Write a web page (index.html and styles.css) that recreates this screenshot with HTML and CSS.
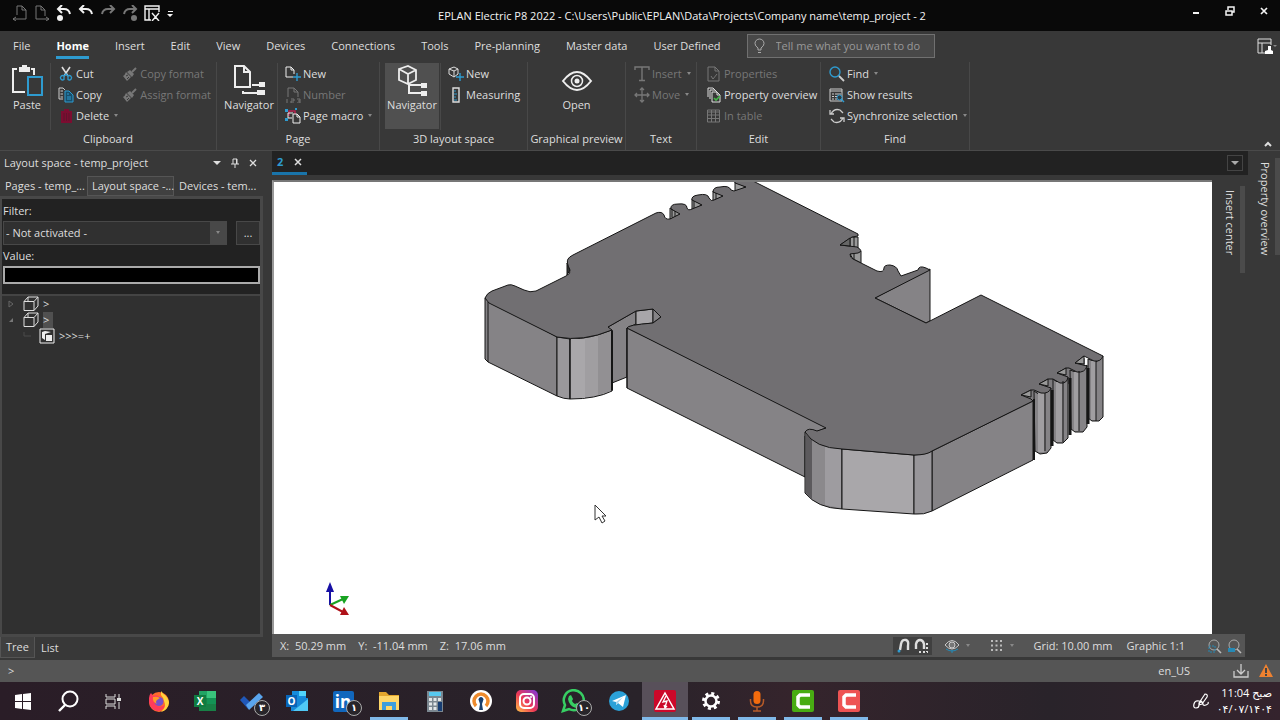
FILE: index.html
```html
<!DOCTYPE html>
<html lang="en">
<head>
<meta charset="utf-8">
<title>EPLAN Electric P8 2022</title>
<link rel="stylesheet" href="styles.css">
</head>
<body>
<svg class="defs" aria-hidden="true">
  <symbol id="cube" viewBox="0 0 16 16"><path d="M1 5.500h10v9H1zM1 5.500l4-4.500h10l-4 4.500M15 1v9l-4 4.500M5 1v4" fill="none" stroke="currentColor"/></symbol>
  <symbol id="brush" viewBox="0 0 16 16"><path d="M14 2l-4 4" stroke="currentColor" stroke-width="2"/><path d="M8 4l4 4-2 3-5-5zM4 6l5 5-4 4-4-5q2-1 3-4z" fill="currentColor"/><path d="M4 10l2-1M5 13l2-2" stroke="#383838"/></symbol>
</svg>

<header class="titlebar">
  <div class="quick">
    <button aria-label="Previous page"><svg class="dim" viewBox="0 0 16 16"><path d="M5 10V1h5l4 4v9H6M10 1v4h4M6 14H1m3-2l-3 2 3 2" fill="none" stroke="currentColor"/></svg></button>
    <button aria-label="Next page"><svg class="dim" viewBox="0 0 16 16"><path d="M9 14H2V1h5l4 4v6M7 1v4h4M9 14h6m-3-2l3 2-3 2" fill="none" stroke="currentColor"/></svg></button>
    <button aria-label="Undo list"><svg viewBox="0 0 16 16"><path d="M3 4h5q5 0 6 5M6 0L2 4l4 4" fill="none" stroke="currentColor" stroke-width="2"/><circle cx="4" cy="13" r="3" fill="currentColor"/></svg></button>
    <button aria-label="Undo"><svg viewBox="0 0 16 16"><path d="M3 4h5q5 0 6 5M6 0L2 4l4 4" fill="none" stroke="currentColor" stroke-width="2"/></svg></button>
    <button aria-label="Redo"><svg class="dim" viewBox="0 0 16 16"><path d="M13 4H8Q3 4 2 9M10 0l4 4-4 4" fill="none" stroke="currentColor" stroke-width="2"/></svg></button>
    <button aria-label="Redo list"><svg class="dim" viewBox="0 0 16 16"><path d="M13 4H8Q3 4 2 9M10 0l4 4-4 4" fill="none" stroke="currentColor" stroke-width="2"/><circle cx="12" cy="13" r="3" fill="currentColor"/></svg></button>
    <button aria-label="Close workspace"><svg viewBox="0 0 16 16"><path d="M7 15H1V1h14v6M1 4h14M5 4v11M8 8l7 8M15 8l-7 8" fill="none" stroke="currentColor" stroke-width="1.400"/></svg></button>
    <button class="narrow" aria-label="Customize"><svg viewBox="0 0 8 16"><path d="M2 6h5v1H2zM1 9h6l-3 3z" fill="currentColor"/></svg></button>
  </div>
  <div class="title">EPLAN Electric P8 2022 - C:\Users\Public\EPLAN\Data\Projects\Company name\temp_project - 2</div>
  <div class="wincontrols">
    <button aria-label="Minimize"><svg viewBox="0 0 12 12"><path d="M3 8h6" stroke="currentColor" stroke-width="2"/></svg></button>
    <button aria-label="Restore"><svg viewBox="0 0 12 12"><path d="M2 6h6v4H2zM4 5V2h6v5H8" fill="none" stroke="currentColor" stroke-width="1.500"/></svg></button>
    <button aria-label="Close"><svg viewBox="0 0 12 12"><path d="M3 3l6 6M9 3L3 9" stroke="currentColor" stroke-width="1.700"/></svg></button>
  </div>
</header>

<section class="ribbon">
  <nav class="tabs">
    <button>File</button><button class="active">Home</button><button>Insert</button><button>Edit</button><button>View</button><button>Devices</button><button>Connections</button><button>Tools</button><button>Pre-planning</button><button>Master data</button><button>User Defined</button>
    <div class="tell">
      <svg viewBox="0 0 16 16"><path d="M6 12v-2q-3-2-3-4.500a4.500 4.500 0 0 1 9 0Q12 8 9 10v2zM6 14.500h3" fill="none" stroke="currentColor"/></svg>
      <input type="text" placeholder="Tell me what you want to do" aria-label="Tell me what you want to do">
    </div>
    <button class="workspace" aria-label="Workspace"><svg viewBox="0 0 20 16"><path d="M9 15H1V1h13v6M1 5h13M5 5v10" fill="none" stroke="currentColor"/><path d="M8 16v-3l3-1V8h3v4l2 1v3z" fill="#fff"/><path d="M16 7h4l-2 2z" fill="#888"/></svg></button>
  </nav>

  <div class="groups">
    <section class="group g-clip">
      <div class="tools">
        <button class="big"><svg viewBox="0 0 32 32"><path d="M6 4H2v23h12M20 4h3v6" fill="none" stroke="#eee" stroke-width="2"/><path d="M8 2h3V0h5v2h3v5H8z" fill="#eee"/><path d="M17 12h14v18H17z" fill="none" stroke="#2e9bd0" stroke-width="2"/></svg><span>Paste</span></button>
        <div class="col">
          <button class="small"><svg viewBox="0 0 16 16"><path d="M4 1l6 9M12 1L6 10" stroke="#ddd" stroke-width="1.600"/><path d="M6 10a2.200 2.200 0 1 0 0 3.500zM10 10a2.200 2.200 0 1 1 0 3.500zM6 10l2-2 2 2" fill="none" stroke="#2e9bd0" stroke-width="1.300"/></svg><span>Cut</span></button>
          <button class="small"><svg viewBox="0 0 16 16"><path d="M5 12H1V1h4l2 2M2.500 4H5m-2.500 3H5m-2.500 3H5" fill="none" stroke="#ccc"/><path d="M7 4h4l4 4v7H7z" fill="#184f6b" stroke="#2e9bd0"/><path d="M9 7h2m-2 3h4m-4 2h4" stroke="#2e9bd0"/></svg><span>Copy</span></button>
          <button class="small"><svg viewBox="0 0 16 16"><path d="M3 3h3V1h5v2h3v12H3z" fill="#7c0d31"/><path d="M6 5v8m2.500-8v8m2.500-8v8" stroke="#5f142c"/></svg><span>Delete</span><i class="caret"></i></button>
        </div>
        <div class="col plain">
          <button class="small off"><svg><use href="#brush"/></svg><span>Copy format</span></button>
          <button class="small off"><svg><use href="#brush"/></svg><span>Assign format</span></button>
        </div>
      </div>
      <h2>Clipboard</h2>
    </section>

    <section class="group g-page">
      <div class="tools">
        <button class="big"><svg viewBox="0 0 32 32"><path d="M2 1h9l6 6v15H2zM11 1v6h6" fill="none" stroke="#eee" stroke-width="2"/><path d="M19 20h8M10 26v2h15" stroke="#eee" stroke-width="2" fill="none"/><path d="M26 17h6v5h-6zM24 25h8v5h-8z" fill="#eee"/></svg><span>Navigator</span></button>
        <div class="col">
          <button class="small"><svg viewBox="0 0 16 16"><path d="M8 11H1V1h5l3 3v4M6 1v3h3" fill="none" stroke="#eee"/><path d="M12 7v8M8 11h8" stroke="#2e9bd0" stroke-width="1.400"/></svg><span>New</span></button>
          <button class="small off"><svg viewBox="0 0 16 16"><path d="M3 10V1h6l4 4v5M9 1v4h4" fill="none" stroke="currentColor"/><path d="M2 12v4M6 12h3v2H6v2h3M12 12h3v4h-3M13 14h2" fill="none" stroke="currentColor"/></svg><span>Number</span></button>
          <button class="small"><svg viewBox="0 0 16 16"><path d="M0 1h3v3H0zM10 0h2v2h-2zM0 10h3v3H0z" fill="#2e9bd0"/><path d="M4 8V3h6v3" fill="none" stroke="#b3214e" stroke-width="1.500"/><path d="M3 5v5h4M3 5h5M8 6h4l3 3v6H8zM12 6v3h3" fill="none" stroke="#eee"/></svg><span>Page macro</span><i class="caret"></i></button>
        </div>
      </div>
      <h2>Page</h2>
    </section>

    <section class="group g-3d">
      <div class="tools">
        <button class="big pressed"><svg viewBox="0 0 32 32"><path d="M3 4l9-3 8 4v10l-8 4-9-4zM3 4l9 5 8-4M12 9v10" fill="none" stroke="#eee" stroke-width="1.800"/><path d="M26 20H13v8h12" stroke="#eee" stroke-width="2" fill="none"/><path d="M25 18h6v5h-6zM25 26h6v5h-6z" fill="#eee"/></svg><span>Navigator</span></button>
        <div class="col">
          <button class="small"><svg viewBox="0 0 16 16"><path d="M1 3l5-2 4 2v5l-4 3-5-3zM1 3l5 2 4-2M6 5v6" fill="none" stroke="#ddd"/><path d="M12 7v8M8 11h8" stroke="#2e9bd0" stroke-width="1.400"/></svg><span>New</span></button>
          <button class="small"><svg viewBox="0 0 16 16"><path d="M5 1h6v14H5z" fill="none" stroke="#ddd" stroke-width="1.400"/><path d="M6 4h2M6 7h3M6 10h2M6 13h3" stroke="#2e9bd0"/></svg><span>Measuring</span></button>
        </div>
      </div>
      <h2>3D layout space</h2>
    </section>

    <section class="group g-preview">
      <div class="tools center">
        <button class="big"><svg viewBox="0 0 32 32"><path d="M2 16Q16-2 30 16Q16 34 2 16z" fill="none" stroke="#eee" stroke-width="2"/><circle cx="16" cy="16" r="5.500" fill="none" stroke="#eee" stroke-width="1.500"/><circle cx="16" cy="16" r="2.500" fill="#eee"/></svg><span>Open</span></button>
      </div>
      <h2>Graphical preview</h2>
    </section>

    <section class="group g-text">
      <div class="tools">
        <div class="col plain">
          <button class="small off"><svg viewBox="0 0 16 16"><path d="M1 4V1h14v3M8 1v13M5 14.500h6" fill="none" stroke="currentColor" stroke-width="1.400"/></svg><span>Insert</span><i class="caret"></i></button>
          <button class="small off"><svg viewBox="0 0 16 16"><path d="M8 1v14M1 8h14M6 3l2-2 2 2M6 13l2 2 2-2M3 6L1 8l2 2M13 6l2 2-2 2" fill="none" stroke="currentColor" stroke-width="1.300"/></svg><span>Move</span><i class="caret"></i></button>
        </div>
      </div>
      <h2>Text</h2>
    </section>

    <section class="group g-edit">
      <div class="tools">
        <div class="col plain">
          <button class="small off"><svg viewBox="0 0 16 16"><path d="M2 1h7l4 4v10H2zM9 1v4h4M5 10l2 3 4-5" fill="none" stroke="currentColor"/></svg><span>Properties</span></button>
          <button class="small"><svg viewBox="0 0 16 16"><path d="M2 10V1h5l2 2M4 12V3h5l2 2M6 5h5l3 3v7H6zM11 5v3h3" fill="none" stroke="#ddd"/><path d="M8 11l2 2 4-4" fill="none" stroke="#45b649" stroke-width="1.600"/></svg><span>Property overview</span></button>
          <button class="small off"><svg viewBox="0 0 16 16"><path d="M1.500 2h12v12h-12zM1.500 4h12M1.500 7h12M1.500 10.500h12M5.500 2v12M9.500 2v12" fill="none" stroke="currentColor"/></svg><span>In table</span></button>
        </div>
      </div>
      <h2>Edit</h2>
    </section>

    <section class="group g-find">
      <div class="tools">
        <div class="col plain">
          <button class="small"><svg viewBox="0 0 16 16"><circle cx="6" cy="6" r="5" fill="none" stroke="#2e9bd0" stroke-width="1.400"/><path d="M10 10l5 5" stroke="#ccc" stroke-width="1.800"/></svg><span>Find</span><i class="caret"></i></button>
          <button class="small"><svg viewBox="0 0 16 16"><path d="M1 2h12v12H1zM1 4h12M3 7h2m1 0h6M3 9.500h2m1 0h4M3 12h2m1 0h2" fill="none" stroke="#ccc"/><circle cx="10.500" cy="10.500" r="2.500" fill="#2b3a42" stroke="#2e9bd0"/><path d="M12 12l3 3" stroke="#2e9bd0" stroke-width="1.500"/></svg><span>Show results</span></button>
          <button class="small"><svg viewBox="0 0 16 16"><path d="M2 6q3-6 9-4l3 3M1 2v4h4M14 10q-3 6-9 4l-3-3M15 14v-4h-4" fill="none" stroke="#ccc" stroke-width="1.300"/></svg><span>Synchronize selection</span><i class="caret"></i></button>
        </div>
      </div>
      <h2>Find</h2>
    </section>
    <button class="collapse" aria-label="Collapse ribbon"><svg viewBox="0 0 10 10"><path d="M2 7l3-3 3 3" fill="none" stroke="currentColor" stroke-width="2"/></svg></button>
  </div>
</section>

<main class="work">
  <aside class="panel">
    <div class="panelhead">
      <h1>Layout space - temp_project</h1>
      <button aria-label="Menu"><svg viewBox="0 0 10 10"><path d="M1 3h8L5 7z" fill="currentColor"/></svg></button>
      <button aria-label="Pin"><svg viewBox="0 0 10 10"><path d="M3 1h4v5M3 1v5M1 6h8M5 6v4M6.500 1v5" fill="none" stroke="currentColor"/></svg></button>
      <button aria-label="Close"><svg viewBox="0 0 10 10"><path d="M2 2l6 6M8 2L2 8" stroke="currentColor" stroke-width="1.300"/></svg></button>
    </div>
    <div class="paneltabs"><button>Pages - temp_...</button><button class="active">Layout space -...</button><button>Devices - tem...</button></div>
    <div class="panelbody">
      <form class="filter">
        <label for="filter">Filter:</label>
        <div class="filterrow">
          <div class="combo"><select id="filter"><option>- Not activated -</option></select><i class="caret"></i></div>
          <button type="button">...</button>
        </div>
        <label for="value">Value:</label>
        <input id="value" type="text">
      </form>
      <ul class="tree">
        <li><svg class="twist" viewBox="0 0 8 8"><path d="M2 1l4 3-4 3z" fill="none" stroke="#666"/></svg><svg><use href="#cube"/></svg><span>&gt;</span></li>
        <li><svg class="twist" viewBox="0 0 8 8"><path d="M6 2v4H2z" fill="#777"/></svg><svg><use href="#cube"/></svg><span class="sel">&gt;</span></li>
        <li class="child"><svg class="twist" viewBox="0 0 8 8"><path d="M1 0v4h7" fill="none" stroke="#4a4a4a"/></svg><svg viewBox="0 0 16 16"><path d="M1 1h14v14H1z" fill="none" stroke="#eee"/><path d="M3 4l3-1 6 1-6 2v6l-3-2zM7 7h6v6H7z" fill="#eee"/></svg><span>&gt;&gt;&gt;=+</span></li>
      </ul>
    </div>
    <div class="paneltabs bottom"><button class="active">Tree</button><button>List</button></div>
  </aside>

  <section class="doc">
    <div class="doctabs">
      <div class="doctab"><a href="#view">2</a><button aria-label="Close tab"><svg viewBox="0 0 10 10"><path d="M2 2l6 6M8 2L2 8" stroke="currentColor" stroke-width="1.500"/></svg></button></div>
      <button class="doclist" aria-label="Open documents"><svg viewBox="0 0 10 10"><path d="M1 3h8L5 7z" fill="currentColor"/></svg></button>
    </div>
    <div class="viewrow">
      <div class="canvas" id="view">
        <svg viewBox="274 182 938 452" preserveAspectRatio="xMidYMid slice" role="img" aria-label="3D terminal housing">
          <g stroke="#151515" stroke-linejoin="round">
            <path d="M1022 395L1031 390L1040 384L1048 379L1058 373L1066 368L1076 363L1085 358V375L1034 403Z" fill="#7d7b7e" stroke="none"/>
            <g fill="#858386">
              <path d="M485 298V359L488 362L557 396V337Z"/><path d="M488 302V362"/>
              <path d="M608 327L636 311V324L627 328V377L612 383Z"/>
              <path d="M627 328L822 423L826 428L805 436V477L627 388Z"/>
              <path d="M932 451L1033 401V460L932 511Z"/>
              <path d="M875 298L930 269V321L926 323Z"/>
              <path d="M1034 391L1040 395L1051 388V448L1047 453L1040 454L1035 451Z"/>
              <path d="M1053 379L1060 384L1068 377V438L1063 443L1057 443L1053 440Z"/>
              <path d="M1070 370L1078 373L1087 365V427L1083 432L1075 432L1071 429Z"/>
              <path d="M1088 359L1096 362L1103 356V417L1099 421L1092 421L1088 418Z"/>
            </g>
            <path d="M1038 393h6v59h-6zM1056 382h6v60h-6zM1074 372h5v59h-5zM1091 361h5v59h-5z" fill="#a09ea1" stroke="none"/>
            <path d="M557 337V396Q564 399 570 399V339Z" fill="#9a989b"/>
            <path d="M570 339V399Q596 399 612 391V330Q590 339 570 339Z" fill="#a09ea1"/>
            <path d="M571 339h14v59h-14z" fill="#a9a7aa" stroke="none"/><path d="M598 336l13-5v60l-13 4z" fill="#929093" stroke="none"/><path d="M570 339V399M612 330V391" fill="none"/>
            <path d="M805 432V493Q817 508 842 509V449Q819 448 805 432Z" fill="#8b898c"/>
            <path d="M806 434l6 6v60l-6-7z" fill="#5c5a5d" stroke="none"/><path d="M825 446l16 3v59l-16-3z" fill="#9e9ca0" stroke="none"/>
            <path d="M842 449L914 455V514L842 509Z" fill="#a9a7aa"/>
            <path d="M914 455Q927 454 932 451V511Q924 515 914 514Z" fill="#98969a"/>
            <path d="M636 311L653 309V323L636 325Z" fill="#a8a6a9"/><path d="M653 309L661 317L653 323Z"  fill="#858386"/>
            <path d="M567 263V275L570 270Z" fill="#333"/>
            <g fill="#999"><path d="M670 208V219L681 214ZM692 199V210L702 205ZM713 191V201L724 196ZM735 182V192L746 187ZM850 237H858V249L850 247ZM850 254L861 251V263L853 259Z"/></g>
            <path fill="#716f72" d="M485 298Q487 293 492 291L508 285Q511 284 515 286L524 290Q530 293 536 291L566 276Q571 274 570 270Q566 262 568 259Q569 257 573 255L656 213Q662 211 664 215Q665 220 670 219L680 214L671 209Q670 204 678 204Q687 203 687 208Q688 211 692 209L702 205L692 200Q691 196 698 195Q708 193 709 198Q711 202 714 200L723 196L713 192Q713 187 720 187Q729 185 731 190Q734 192 737 190L746 187L735 183V181H753L858 234V236L852 237L840 245L857 247Q864 251 858 253L850 254Q850 258 853 259L877 271Q884 273 884 268Q884 265 890 265Q897 266 898 271L901 276L918 270Q919 265 926 268L930 270L875 298L926 323L981 295L1103 356Q1101 362 1094 361L1088 358L1084 356L1075 363L1087 366Q1085 373 1077 372L1069 368L1066 368L1057 373L1068 377Q1067 384 1060 383L1053 379L1048 379L1039 384L1051 388Q1049 394 1041 393L1034 390L1031 390L1021 395L1031 399L1033 401L932 451Q927 455 914 455L842 449Q815 448 805 432Q808 427 817 431L826 428L627 328Q627 325 653 323L661 317L653 309L636 311L608 327L612 330Q583 342 557 337L489 303Z"/>
            <path d="M1075 363L1084 356V364ZM1057 373L1066 368V375ZM1039 384L1048 379V386ZM1021 395L1031 390V397Z" fill="#999"/>
            <path d="M840 245L850 238V246ZM672 209V217M675 211V216M694 201V208M716 193V199M854 237V247M854 254V259" fill="#666"/>
            <path d="M627 328V388M1045 393V451M1063 381V442M1079 371V431M1096 361V421" fill="none"/>
            <path d="M1034 399V460M612 331V390" stroke-width="2" fill="none"/>
            <path d="M1052 390V446M1070 378V435M1088 368V424" stroke-width="3" fill="none"/>
          </g>
          <path d="M330 605V588" stroke="#1710a5" stroke-width="2"/><path d="M326 592L330 582L334 592Z" fill="#1710a5"/>
          <path d="M330 605L343 599" stroke="#18a322" stroke-width="2"/><path d="M340 596L349 596L344 604Z" fill="#18a322"/>
          <path d="M330 605L343 612" stroke="#ae1018" stroke-width="2"/><path d="M344 607L349 615L340 615Z" fill="#ae1018"/>
          <path d="M595 505V520L599 517L602 523L605 521L602 516H606Z" fill="#fff" stroke="#333"/>
        </svg>
      </div>
      <div class="rail inner"><button>Insert center</button></div>
    </div>
    <div class="status">
      <span>X:&nbsp; 50.29 mm</span><span>Y:&nbsp; -11.04 mm</span><span>Z:&nbsp; 17.06 mm</span>
      <div class="snaps">
        <button aria-label="Object snap"><svg viewBox="0 0 16 16"><path d="M5 12L6 6q1-5 5-4 3 1 2 6v4" fill="none" stroke="#ddd" stroke-width="2.400"/><circle cx="4" cy="13" r="1.500" fill="#2e9bd0"/></svg></button>
        <button aria-label="Grid snap"><svg viewBox="0 0 16 16"><path d="M2 11V6q1-4 4-4t4 4v5" fill="none" stroke="#ddd" stroke-width="2.400"/><path d="M13 5v9M5 14h9" stroke="#ddd" stroke-width="2" stroke-dasharray="2 2"/></svg></button>
      </div>
      <button class="drop" aria-label="View"><svg viewBox="0 0 16 16"><path d="M1 7q7-9 14 0-7 8-14 0z" fill="none" stroke="#ccc"/><circle cx="8" cy="7" r="3" fill="#777" stroke="#ccc"/><path d="M2 11q6 4 12 0M8 12v3" fill="none" stroke="#2589b5"/></svg><i class="caret"></i></button>
      <button class="drop" aria-label="Grid"><svg viewBox="0 0 16 16"><path d="M3 3h11M3 7.500h11M3 12h11" stroke="#bbb" stroke-width="2" stroke-dasharray="2 2.500"/></svg><i class="caret"></i></button>
      <span>Grid: 10.00 mm</span><span class="scale">Graphic 1:1</span>
      <button aria-label="Zoom window"><svg viewBox="0 0 16 16"><circle cx="8" cy="7" r="5" fill="none" stroke="#aaa"/><path d="M11 11l4 4" stroke="#bbb" stroke-width="1.600"/><path d="M3 8h6v6H3z" fill="none" stroke="#2589b5" stroke-dasharray="2 1"/></svg></button>
      <button aria-label="Zoom entire page"><svg viewBox="0 0 16 16"><circle cx="8" cy="7" r="5" fill="none" stroke="#aaa"/><path d="M11 11l4 4" stroke="#bbb" stroke-width="1.600"/><path d="M2 10h7v4H2z" fill="#2589b5"/></svg></button>
    </div>
  </section>
  <div class="rail outer"><button>Property overview</button></div>
</main>

<div class="command">
  <span>&gt;</span><span class="lang">en_US</span>
  <svg viewBox="0 0 16 16"><path d="M1 8v6h14V8M8 1v10M4 7l4 4 4-4" fill="none" stroke="#ccc" stroke-width="1.300"/></svg>
  <svg viewBox="0 0 16 16"><path d="M8 1l7 13H1z" fill="#ee8130"/><path d="M8 5v5M8 11v2" stroke="#444" stroke-width="2"/></svg>
</div>

<footer class="taskbar">
  <div class="sys">
    <button aria-label="Start"><svg viewBox="0 0 24 24"><path d="M4 6l7-1v7H4zM12 5l8-1v8h-8zM4 13h7v7l-7-1zM12 13h8v8l-8-1z" fill="#fff"/></svg></button>
    <button aria-label="Search"><svg viewBox="0 0 24 24"><circle cx="14" cy="10" r="7.500" fill="none" stroke="#fff" stroke-width="2"/><path d="M9 16l-6 6" stroke="#fff" stroke-width="2.400"/></svg></button>
    <button aria-label="Task view"><svg viewBox="0 0 24 24"><path d="M5 5v3h9V5M5 20v-3h9v3M5 10h9v5H5zM18 5v4M18 13v7" fill="none" stroke="#ddd"/><path d="M16 9h4v3h-4z" fill="#ddd"/></svg></button>
  </div>
  <div class="apps">
    <button aria-label="Firefox"><svg viewBox="0 0 24 24"><circle cx="12" cy="13" r="10" fill="#ff6a2b"/><path d="M14 2q2 3 4 4 4 4 4 8-1 7-8 9 6-5 3-11-1-4-3-6z" fill="#ffd33c"/><path d="M2 9q0-3 2-5l2 3q5-2 7 2-6 0-5 5 3 6 10 2-2 6-8 6Q3 20 2 13z" fill="#ff3c5a"/><circle cx="12" cy="12.500" r="4.500" fill="#7751c9"/><path d="M6 8q4-1 7 1l-3 2q-2 2 0 4-5-2-4-7z" fill="#ff9a26"/></svg></button>
    <button aria-label="Excel"><svg viewBox="0 0 24 24"><path d="M6 2h17v20H6z" fill="#188046"/><path d="M14 2h9v7h-9z" fill="#39c47c"/><path d="M6 2h8v7H6z" fill="#21a464"/><path d="M14 9h9v6h-9z" fill="#149355"/><path d="M1 6h12v12H1z" fill="#107c41"/><text x="7" y="16" class="logo">X</text></svg></button>
    <button aria-label="To Do"><svg viewBox="0 0 24 24"><path d="M1 11l4-4 8 8-4 5z" fill="#2058b9"/><path d="M7 16L20 4l4 4L10 21z" fill="#5aa5ee"/></svg><b class="badge">۳</b></button>
    <button aria-label="Outlook"><svg viewBox="0 0 24 24"><path d="M7 2h14v9H7z" fill="#168bdc"/><path d="M14 2h7v5h-7z" fill="#50d4fb"/><path d="M6 9h17v13H6z" fill="#1689d7"/><path d="M23 10L8 22h15z" fill="#50c9f5"/><path d="M1 6h11v12H1z" fill="#0865b8"/><text x="6.500" y="16" class="logo">O</text></svg></button>
    <button aria-label="LinkedIn"><svg viewBox="0 0 24 24"><rect x="2" y="2" width="21" height="21" rx="2" fill="#1167bd"/><text x="12" y="19" class="logo big-logo">in</text></svg><b class="badge">۱</b></button>
    <button class="open" aria-label="File Explorer"><svg viewBox="0 0 24 24"><path d="M2 3h7l3 3h10v3H2z" fill="#e4a72d"/><path d="M2 7h20v14H2z" fill="#ffd768"/><path d="M5 13h14v8h-4v-4H9v4H5z" fill="#3d9edc"/></svg></button>
    <button aria-label="Calculator"><svg viewBox="0 0 24 24"><path d="M4 2h16v21H4z" fill="#7b8790"/><path d="M6 3h12v4H6z" fill="#57c8ef"/><path d="M6 9h3v3H6zM10.500 9h3v3h-3zM15 9h3v3h-3zM6 13.500h3v3H6zM10.500 13.500h3v3h-3zM6 18h3v3H6zM10.500 18h3v3h-3z" fill="#e2e6e8"/><path d="M15 13h4v9h-4z" fill="#173d72"/></svg></button>
    <button aria-label="OpenVPN"><svg viewBox="0 0 24 24"><circle cx="12" cy="12" r="11" fill="#fff"/><path d="M7 17a7 7 0 1 1 10 0" fill="none" stroke="#ee8b2d" stroke-width="3.500"/><path d="M10 12a2.500 2.500 0 1 1 4 0l-1 3 1 6h-4l1-6z" fill="#173e6d"/></svg></button>
    <button aria-label="Instagram"><svg viewBox="0 0 24 24"><defs><linearGradient id="ig" x1="0" y1="1" x2="1" y2="0"><stop offset="0" stop-color="#ffc647"/><stop offset=".45" stop-color="#ed3755"/><stop offset="1" stop-color="#7c37df"/></linearGradient></defs><rect x="1" y="1" width="22" height="22" rx="5" fill="url(#ig)"/><rect x="5" y="5" width="14" height="14" rx="4" fill="none" stroke="#fff" stroke-width="2"/><circle cx="12" cy="12" r="3.500" fill="none" stroke="#fff" stroke-width="2"/><circle cx="16" cy="8" r="1" fill="#fff"/></svg></button>
    <button aria-label="WhatsApp"><svg viewBox="0 0 24 24"><path d="M2 22l2-6a10 10 0 1 1 4 4z" fill="none" stroke="#37ce63" stroke-width="2.500"/><path d="M8 7l2-1 2 4-1 2q1 2 3 3l2-1 3 2q-1 3-4 3Q8 17 7 10z" fill="#37ce63"/></svg><b class="badge">۱۰</b></button>
    <button aria-label="Telegram"><svg viewBox="0 0 24 24"><circle cx="12" cy="12" r="10" fill="#2ba1d8"/><path d="M5 12l14-6-3 12-5-4-2 2v-3z" fill="#fff"/><path d="M9 13l7-5-5 6-2 2z" fill="#a9d6ec"/></svg></button>
    <button class="open current" aria-label="EPLAN"><svg viewBox="0 0 24 24"><rect x="1" y="1" width="22" height="22" rx="2" fill="#cc0829"/><path d="M12 4l9 16H3z" fill="none" stroke="#fff" stroke-width="1.500"/><path d="M13 7l-3 6 4-1-2 6m-1-2l1 3 2-2" fill="none" stroke="#fff" stroke-width="1.300"/></svg></button>
    <button class="open" aria-label="Settings"><svg viewBox="0 0 24 24"><circle cx="12" cy="12" r="7.500" fill="none" stroke="#fff" stroke-width="3" stroke-dasharray="3 2.890"/><circle cx="12" cy="12" r="5.500" fill="none" stroke="#fff" stroke-width="2.500"/></svg></button>
    <button class="open" aria-label="Recorder"><svg viewBox="0 0 24 24"><rect x="8.500" y="2" width="7" height="13" rx="3.500" fill="#f36b0d"/><path d="M5.500 10v2q0 6 6.500 6t6.500-6v-2M12 18v4M8 22h8" fill="none" stroke="#b85b28" stroke-width="1.500"/></svg></button>
    <button class="open" aria-label="Camtasia"><svg viewBox="0 0 24 24"><rect x="1" y="1" width="22" height="22" rx="2" fill="#48ac12"/><path d="M19 6H9L7 8v8l2 2h10" fill="none" stroke="#fff" stroke-width="3.500"/></svg></button>
    <button class="open" aria-label="Camtasia Recorder"><svg viewBox="0 0 24 24"><rect x="1" y="1" width="22" height="22" rx="2" fill="#ee5353"/><path d="M19 6H9L7 8v8l2 2h10" fill="none" stroke="#fff" stroke-width="3.500"/></svg></button>
  </div>
  <svg class="pen" viewBox="0 0 16 16"><path d="M9 9q-3 0-3 3t-3 3-2-4 5-3 4 3 3 1 2-3M6 10l6-9q3 0 2 3l-5 7-3 1zM8 8l2 2" fill="none" stroke="#fff" stroke-width="1.200"/></svg>
  <div class="clock"><span dir="rtl">صبح 11:04</span><span>۰۴/۰۷/۱۴۰۴</span></div>
</footer>
</body>
</html>
```

FILE: styles.css
```css
* { box-sizing: border-box; }
body {
  margin: 0;
  height: 100vh;
  display: flex;
  flex-direction: column;
  overflow: hidden;
  background: #383838;
  color: #dedede;
  font: 11px/16px "Open Sans", "Noto Sans", "DejaVu Sans", sans-serif;
}
button, input, select { font: inherit; color: inherit; }
button { background: none; border: 0; padding: 0; white-space: nowrap; }
h1, h2 { margin: 0; font-size: 11px; font-weight: 400; }
svg { width: 16px; height: 16px; display: block; flex: none; }
.defs { display: none; }
.dim { color: #777; }
.caret {
  border: 2px solid transparent;
  border-top: 3px solid #888;
  border-bottom: 0;
  margin-left: 3px;
}

.titlebar {
  flex: none;
  height: 31px;
  display: flex;
  justify-content: space-between;
  background: #090909;
  color: #f3f3f3;
}
.quick { display: flex; align-items: center; gap: 6px; padding: 0 0 5px 12px; }
.title { line-height: 32px; white-space: nowrap; }
.wincontrols { display: flex; align-items: start; padding: 5px 10px 0 0; gap: 22px; }
.wincontrols svg { width: 12px; height: 12px; }
.narrow svg { width: 8px; }

.ribbon { flex: none; border-bottom: 1px solid #4a4a4a; }
.tabs { height: 30px; display: flex; align-items: center; gap: 26px; padding-left: 13px; }
.tabs > button { height: 26px; padding-top: 2px; border-bottom: 3px solid transparent; }
.tabs > .active { border-color: #2e9bd0; font-weight: 700; color: #fff; }
.tell {
  display: flex;
  align-items: center;
  gap: 8px;
  width: 188px;
  height: 24px;
  padding: 0 4px;
  border: 1px solid #707070;
  background: #484848;
  color: #aaa;
}
.tell input { flex: 1; min-width: 0; padding: 0; border: 0; background: none; }
.tell input::placeholder { color: #999; opacity: 1; }
.tabs > .workspace { margin-left: auto; height: 16px; border: 0; padding: 0 3px 0 0; }
.workspace svg { width: 20px; }

.groups { display: flex; height: 89px; padding-top: 1px; }
.group { display: flex; flex-direction: column; flex: none; border-right: 1px solid #484848; }
.g-clip { width: 217px; }
.g-page { width: 163px; }
.g-3d { width: 148px; }
.g-preview { width: 98px; }
.g-text { width: 71px; }
.g-edit { width: 124px; }
.g-find { width: 149px; }
.group h2 { text-align: center; white-space: nowrap; line-height: 18px; }
.tools { display: flex; height: 68px; padding: 1px 0 0 5px; }
.center { justify-content: center; padding-left: 0; }
.big { flex: none; width: 54px; height: 66px; display: flex; flex-direction: column; align-items: center; padding-top: 2px; }
.g-clip .big { width: 44px; }
.big svg { width: 32px; height: 32px; }
.pressed { background: #505050; }
.col { display: flex; flex-direction: column; padding-left: 7px; margin-left: 1px; border-left: 1px solid #484848; }
.plain { border: 0; margin: 0; padding-left: 4px; }
.g-text .plain, .g-find .plain { padding-left: 3px; }
.small { display: flex; align-items: center; gap: 2px; height: 21px; }
.off { color: #777; }
.collapse { margin: auto 7px 1px auto; }
.collapse svg { width: 10px; height: 10px; }

.work { flex: 1; min-height: 0; display: flex; }
.panel { flex: none; width: 263px; margin-right: 9px; display: flex; flex-direction: column; }
.panelhead { height: 24px; display: flex; align-items: center; gap: 8px; padding: 0 5px 0 4px; }
.panelhead h1 { margin-right: auto; }
.panelhead svg, .doctabs svg { width: 10px; height: 10px; }
.paneltabs { display: flex; height: 21px; padding-top: 1px; }
.paneltabs button { width: 87px; border: 1px solid transparent; padding: 0 4px; text-align: left; }
.paneltabs .active { border-color: #555; background: #404040; }
.panelbody {
  flex: 1;
  min-height: 0;
  display: flex;
  flex-direction: column;
  border: 3px solid #484848;
  border-left-width: 2px;
  background: #222;
}
.filter { display: flex; flex-direction: column; padding: 2px 0 0 1px; }
.filter label { line-height: 20px; }
.filterrow { display: flex; gap: 9px; height: 24px; margin-bottom: 1px; }
.combo { position: relative; flex: 1; border: 1px solid #484848; background: #303030; }
.combo select { width: 100%; height: 100%; appearance: none; border: 0; background: linear-gradient(#484848, #484848) right / 16px no-repeat; padding: 0 4px 0 2px; }
.combo .caret { position: absolute; right: 6px; top: 9px; }
.filterrow button { width: 24px; border: 1px solid #484848; background: #303030; }
#value { height: 18px; width: 100%; border: 2px solid #aaa; background: #000; }
.tree { flex: 1; margin: 10px 0 0; padding: 0 5px; list-style: none; background: #303030; border-top: 2px solid #444; }
.tree li { display: flex; align-items: center; gap: 4px; height: 16px; }
.tree .twist { width: 8px; height: 8px; margin-right: 4px; }
.tree .child { padding-left: 16px; }
.sel { background: #505050; padding-right: 4px; }
.bottom { height: 23px; padding: 0 0 2px; }
.bottom button { width: auto; padding: 0 5px; }
.bottom .active { border-top: 0; }

.doc { flex: 1; min-width: 0; display: flex; flex-direction: column; }
.doctabs { height: 24px; display: flex; justify-content: space-between; align-items: center; background: #222; }
.doctab { height: 24px; display: flex; align-items: center; gap: 10px; padding: 0 4px 0 5px; border-bottom: 3px solid #1974aa; }
.doctab a { color: #2e9bd0; text-decoration: none; font-weight: 700; }
.doclist { padding: 2px; margin-right: 5px; border: 1px solid #444; color: #aaa; }
.viewrow { flex: 1; min-height: 0; display: flex; padding-top: 5px; }
.canvas { flex: 1; min-width: 0; background: #fff; border-top: 2px solid #777; border-left: 2px solid #999; }
.canvas svg { width: 100%; height: 100%; }
.rail { flex: none; display: flex; align-items: start; justify-content: end; }
.rail button { writing-mode: vertical-rl; text-align: left; border-right: 5px solid #4b4b4b; padding: 4px 2px 0 0; }
.inner { width: 36px; padding: 6px 3px 0 0; }
.inner button { height: 87px; }
.outer { width: 32px; padding-top: 7px; }
.status { flex: none; height: 23px; margin: 0 3px 3px 0; display: flex; align-items: center; gap: 12px; padding: 0 3px 0 8px; background: #555; white-space: nowrap; }
.snaps { display: flex; gap: 3px; margin-left: auto; padding: 1px 2px; background: #404040; }
.drop { display: flex; align-items: center; }
.drop .caret { margin-left: 6px; }
.drop + .drop { margin: 0 8px 0 6px; }
.status .scale { margin: 0 9px 0 2px; }
.status > button:last-child { margin-left: -8px; }

.command { flex: none; height: 22px; display: flex; align-items: center; gap: 9px; padding: 0 6px 0 8px; background: #555; }
.lang { margin: 0 34px 0 auto; }

.taskbar { flex: none; height: 38px; display: flex; align-items: center; background: linear-gradient(90deg, #2a1d27, #29232a 50%, #35242c 62%, #29232a 82%, #34232d); }
.sys, .apps { display: flex; height: 100%; }
.taskbar button { position: relative; display: flex; justify-content: center; align-items: center; }
.sys button { width: 45px; }
.apps { padding-left: 1px; }
.apps button { width: 46px; }
.taskbar button svg { width: 24px; height: 24px; }
.open::after { content: ""; position: absolute; left: 4px; right: 4px; bottom: 0; height: 3px; background: #80b9e9; }
.current { background: #58505a; }
.current::after { left: 0; right: 0; }
.badge {
  position: absolute;
  right: 4px;
  bottom: 4px;
  width: 16px;
  height: 16px;
  border: 1px solid #aaa;
  border-radius: 8px;
  background: #28252a;
  color: #fff;
  font: 700 10px/14px "DejaVu Sans", sans-serif;
  text-align: center;
}
.logo { fill: #fff; font: 700 10px "Open Sans", sans-serif; text-anchor: middle; }
.big-logo { font-size: 17px; }
.pen { margin-left: auto; }
.clock { flex: none; display: flex; flex-direction: column; align-items: end; width: 71px; padding-right: 8px; color: #fff; white-space: nowrap; }
```
